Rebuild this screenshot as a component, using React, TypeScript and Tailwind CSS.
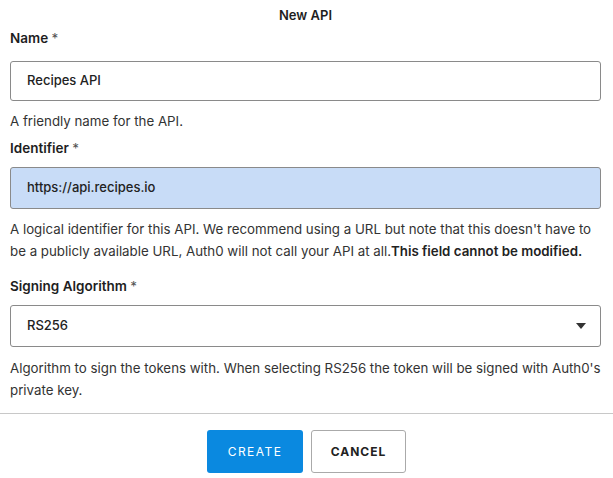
import React from 'react';

const font = { fontFamily: 'Inter, Roboto, "Noto Sans", sans-serif' };

function Label({ text }: { text: string }) {
  return (
    <div className="text-[13.5px] font-semibold leading-[18px] text-[#1e1e1e]">
      {text} <span className="font-normal text-[#555]">*</span>
    </div>
  );
}

function Caret() {
  return (
    <svg width="10" height="6" viewBox="0 0 10 6" className="text-[#333]">
      <path d="M0 0h10L5 6z" fill="currentColor" />
    </svg>
  );
}

export default function App() {
  return (
    <div className="w-[613px] h-[478px] bg-white text-[#333]" style={font}>
      <div className="pl-[10px] pr-[12px]">
        <div className="pt-[6px] text-center text-[13px] font-semibold leading-[18px] text-[#1e1e1e]">New API</div>

        <div className="mt-[5px]">
          <Label text="Name" />
        </div>
        <div className="mt-[14px] h-[40px] flex items-center px-[16px] border border-[#8a8a8a] rounded-[3px] text-[13px] font-medium text-[#222]">
          Recipes API
        </div>
        <div className="mt-[10px] text-[13.3px] leading-[20px] text-[#333]">A friendly name for the API.</div>

        <div className="mt-[8px]">
          <Label text="Identifier" />
        </div>
        <div className="mt-[10px] h-[42px] flex items-center px-[16px] border border-[#8a8a8a] rounded-[3px] bg-[#c8dcf7] text-[13px] font-medium text-[#222]">
          https://api.recipes.io
        </div>
        <p className="mt-[9px] text-[13.3px] leading-[22px] text-[#333] whitespace-nowrap">
          A logical identifier for this API. We recommend using a URL but note that this doesn't have to
          <br />
          be a publicly available URL, Auth0 will not call your API at all.
          <span className="font-semibold text-[#222]">This field cannot be modified.</span>
        </p>

        <div className="mt-[15px]">
          <Label text="Signing Algorithm" />
        </div>
        <div className="mt-[10px] h-[42px] flex items-center justify-between pl-[16px] pr-[14px] border border-[#8a8a8a] rounded-[3px] text-[13px] font-medium text-[#222]">
          <span>RS256</span>
          <Caret />
        </div>
        <p className="mt-[10px] text-[13.3px] leading-[22px] text-[#333] whitespace-nowrap">
          Algorithm to sign the tokens with. When selecting RS256 the token will be signed with Auth0's
          <br />
          private key.
        </p>
      </div>

      <div className="mt-[12px] border-t border-[#c8c8c8]" />

      <div className="mt-[16px] flex justify-center gap-[8px]">
        <button className="w-[96px] h-[43px] rounded-[3px] bg-[#0a89e0] text-white text-[12px] tracking-[0.12em]">
          CREATE
        </button>
        <button className="w-[95px] h-[43px] rounded-[3px] border border-[#aaa] bg-white text-[#222] text-[12px] font-bold tracking-[0.08em]">
          CANCEL
        </button>
      </div>
    </div>
  );
}
